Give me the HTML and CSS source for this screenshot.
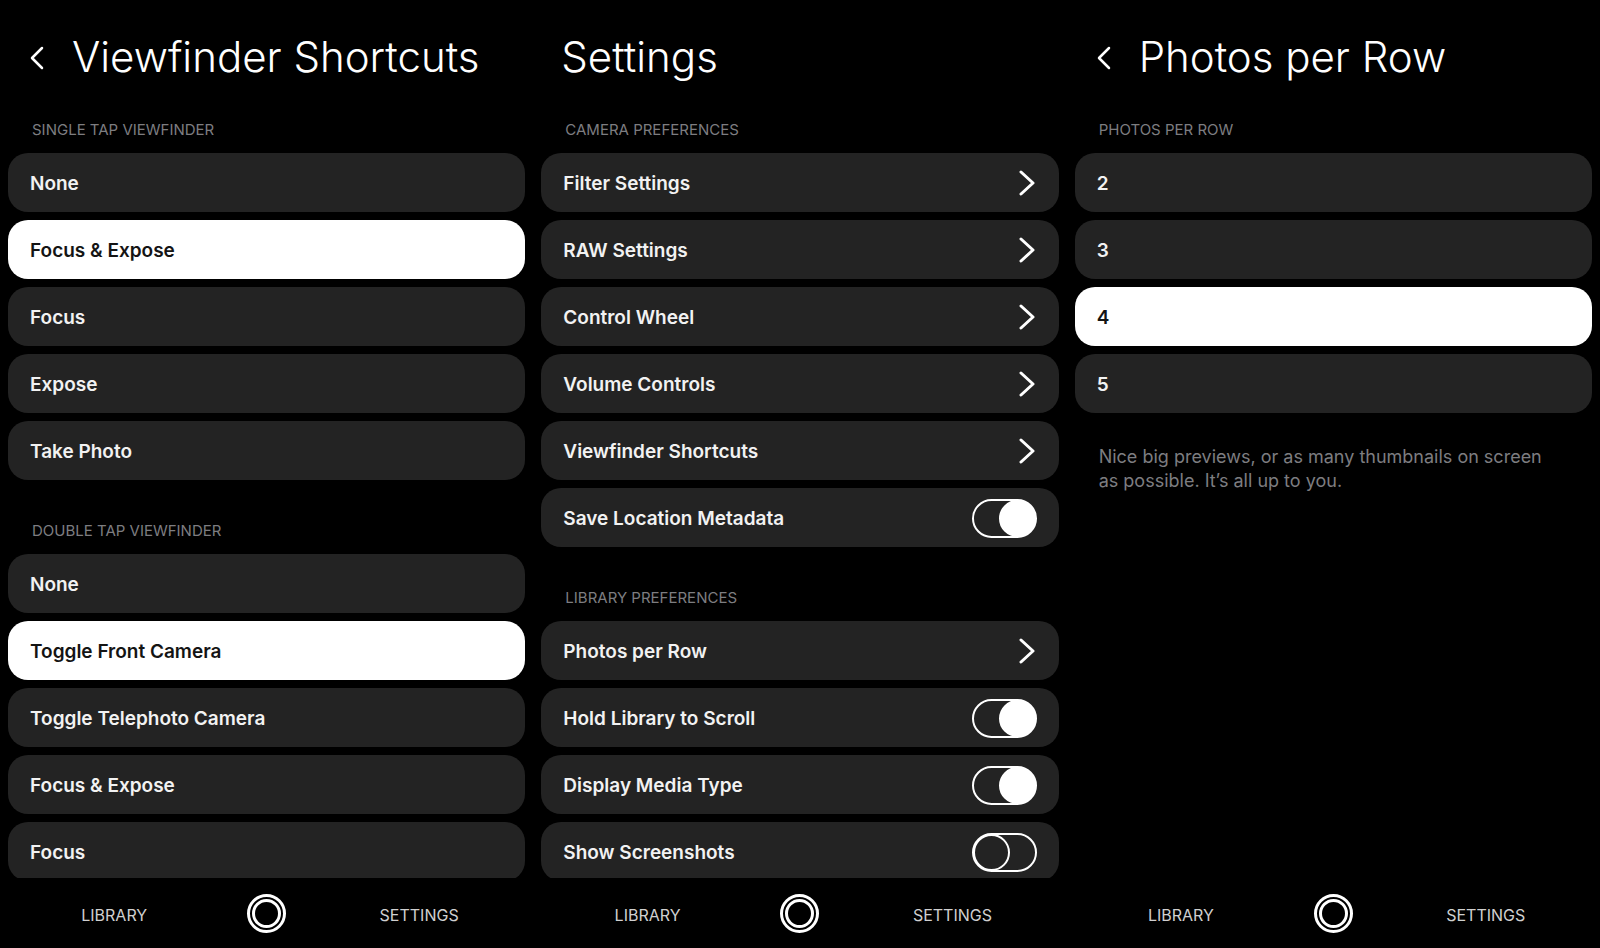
FILE: index.html
```html
<!DOCTYPE html>
<html lang="en">
<head>
    <meta charset="UTF-8">
    <meta name="viewport" content="width=device-width, initial-scale=1.0">
    <title>Camera Settings</title>
    <link rel="stylesheet" href="styles.css">
</head>
<body>
    <!-- Viewfinder Shortcuts -->
    <div class="screen">
        <header class="header">
            <button type="button" class="back-btn" aria-label="Back">
                <svg width="14" height="24" viewBox="0 0 14 24"><path d="M12 2 L2 12 L12 22"/></svg>
            </button>
            <h1>Viewfinder Shortcuts</h1>
        </header>
        <main class="content">
            <section class="group">
                <h2>SINGLE TAP VIEWFINDER</h2>
                <label class="row option"><input type="radio" name="single-tap">None</label>
                <label class="row option"><input type="radio" name="single-tap" checked>Focus &amp; Expose</label>
                <label class="row option"><input type="radio" name="single-tap">Focus</label>
                <label class="row option"><input type="radio" name="single-tap">Expose</label>
                <label class="row option"><input type="radio" name="single-tap">Take Photo</label>
            </section>
            <section class="group">
                <h2>DOUBLE TAP VIEWFINDER</h2>
                <label class="row option"><input type="radio" name="double-tap">None</label>
                <label class="row option"><input type="radio" name="double-tap" checked>Toggle Front Camera</label>
                <label class="row option"><input type="radio" name="double-tap">Toggle Telephoto Camera</label>
                <label class="row option"><input type="radio" name="double-tap">Focus &amp; Expose</label>
                <label class="row option"><input type="radio" name="double-tap">Focus</label>
            </section>
        </main>
        <nav class="tab-bar">
            <a href="#library">LIBRARY</a>
            <button type="button" class="shutter" aria-label="Camera"></button>
            <a href="#settings">SETTINGS</a>
        </nav>
    </div>

    <!-- Settings -->
    <div class="screen">
        <header class="header">
            <h1>Settings</h1>
        </header>
        <main class="content">
            <section class="group">
                <h2>CAMERA PREFERENCES</h2>
                <button type="button" class="row">Filter Settings
                    <svg class="chevron" width="16" height="26" viewBox="0 0 16 26"><path d="M2 2 L14 13 L2 24"/></svg>
                </button>
                <button type="button" class="row">RAW Settings
                    <svg class="chevron" width="16" height="26" viewBox="0 0 16 26"><path d="M2 2 L14 13 L2 24"/></svg>
                </button>
                <button type="button" class="row">Control Wheel
                    <svg class="chevron" width="16" height="26" viewBox="0 0 16 26"><path d="M2 2 L14 13 L2 24"/></svg>
                </button>
                <button type="button" class="row">Volume Controls
                    <svg class="chevron" width="16" height="26" viewBox="0 0 16 26"><path d="M2 2 L14 13 L2 24"/></svg>
                </button>
                <button type="button" class="row">Viewfinder Shortcuts
                    <svg class="chevron" width="16" height="26" viewBox="0 0 16 26"><path d="M2 2 L14 13 L2 24"/></svg>
                </button>
                <label class="row">Save Location Metadata
                    <input type="checkbox" class="toggle" checked>
                </label>
            </section>
            <section class="group">
                <h2>LIBRARY PREFERENCES</h2>
                <button type="button" class="row">Photos per Row
                    <svg class="chevron" width="16" height="26" viewBox="0 0 16 26"><path d="M2 2 L14 13 L2 24"/></svg>
                </button>
                <label class="row">Hold Library to Scroll
                    <input type="checkbox" class="toggle" checked>
                </label>
                <label class="row">Display Media Type
                    <input type="checkbox" class="toggle" checked>
                </label>
                <label class="row">Show Screenshots
                    <input type="checkbox" class="toggle">
                </label>
            </section>
        </main>
        <nav class="tab-bar">
            <a href="#library">LIBRARY</a>
            <button type="button" class="shutter" aria-label="Camera"></button>
            <a href="#settings">SETTINGS</a>
        </nav>
    </div>

    <!-- Photos per Row -->
    <div class="screen">
        <header class="header">
            <button type="button" class="back-btn" aria-label="Back">
                <svg width="14" height="24" viewBox="0 0 14 24"><path d="M12 2 L2 12 L12 22"/></svg>
            </button>
            <h1>Photos per Row</h1>
        </header>
        <main class="content">
            <section class="group">
                <h2>PHOTOS PER ROW</h2>
                <label class="row option"><input type="radio" name="per-row">2</label>
                <label class="row option"><input type="radio" name="per-row">3</label>
                <label class="row option"><input type="radio" name="per-row" checked>4</label>
                <label class="row option"><input type="radio" name="per-row">5</label>
            </section>
            <p class="hint">Nice big previews, or as many thumbnails on screen as possible. It’s all up to you.</p>
        </main>
        <nav class="tab-bar">
            <a href="#library">LIBRARY</a>
            <button type="button" class="shutter" aria-label="Camera"></button>
            <a href="#settings">SETTINGS</a>
        </nav>
    </div>
</body>
</html>
```

FILE: styles.css
```css
*,
*::before {
    margin: 0;
    padding: 0;
    box-sizing: border-box;
    font-family: Inter, "Liberation Sans", sans-serif;
}

body {
    background-color: #000;
    color: #f2f2f2;
    height: 100vh;
    display: grid;
    grid-template-columns: repeat(3, 1fr);
}

button {
    background: none;
    border: none;
    color: inherit;
    cursor: pointer;
}

svg {
    display: block;
    fill: none;
    stroke: #fff;
    stroke-linecap: round;
    stroke-linejoin: round;
}

.screen {
    height: 100vh;
    min-width: 0;
    display: flex;
    flex-direction: column;
}

.header {
    height: 112px;
    padding-left: 28px;
    display: flex;
    align-items: center;
    gap: 28px;
    flex-shrink: 0;
}

.header h1 {
    font-size: 42px;
    font-weight: 300;
    color: #fff;
    white-space: nowrap;
}

.back-btn {
    padding: 4px 0 0 2px;
}

.back-btn svg {
    stroke-width: 2.5;
}

.content {
    flex: 1;
    min-height: 0;
    overflow: hidden;
    padding: 3px 8px 0;
}

.group {
    display: flex;
    flex-direction: column;
    gap: 8px;
}

.group + .group {
    margin-top: 36px;
}

.group h2 {
    padding-left: 24px;
    font-size: 15px;
    line-height: 30px;
    font-weight: 400;
    color: #7d7d80;
}

.row {
    height: 59px;
    padding: 1px 22px 0;
    display: flex;
    align-items: center;
    justify-content: space-between;
    border-radius: 20px;
    background-color: #232323;
    font-size: 19px;
    font-weight: 600;
    text-align: left;
    cursor: pointer;
}

.option {
    justify-content: flex-start;
}

.option input {
    appearance: none;
}

.option:has(input:checked) {
    background-color: #fff;
    color: #141414;
}

.chevron {
    margin-right: 2px;
    stroke-width: 3;
}

/* On/off switch */
.toggle {
    appearance: none;
    position: relative;
    width: 65px;
    height: 39px;
    border: 2px solid #fff;
    border-radius: 20px;
    cursor: pointer;
}

.toggle::before {
    content: "";
    position: absolute;
    top: -1px;
    left: -1px;
    width: 37px;
    height: 37px;
    border: 2px solid #fff;
    border-radius: 50%;
}

.toggle:checked::before {
    left: auto;
    right: -1px;
    background-color: #fff;
}

.hint {
    margin: 32px 40px 0 24px;
    font-size: 18px;
    line-height: 24px;
    font-weight: 400;
    color: #7d7d80;
}

/* Bottom bar */
.tab-bar {
    height: 70px;
    padding: 0 38px;
    display: grid;
    grid-template-columns: repeat(3, 1fr);
    align-items: center;
    justify-items: center;
    flex-shrink: 0;
}

.tab-bar a {
    color: #d0d0d0;
    font-size: 16px;
    text-decoration: none;
    padding-top: 4px;
}

.shutter {
    width: 39px;
    height: 39px;
    padding: 2px;
    border: 3px solid #fff;
    border-radius: 50%;
}

.shutter::before {
    content: "";
    display: block;
    height: 29px;
    border: 3px solid #fff;
    border-radius: 50%;
}
```
